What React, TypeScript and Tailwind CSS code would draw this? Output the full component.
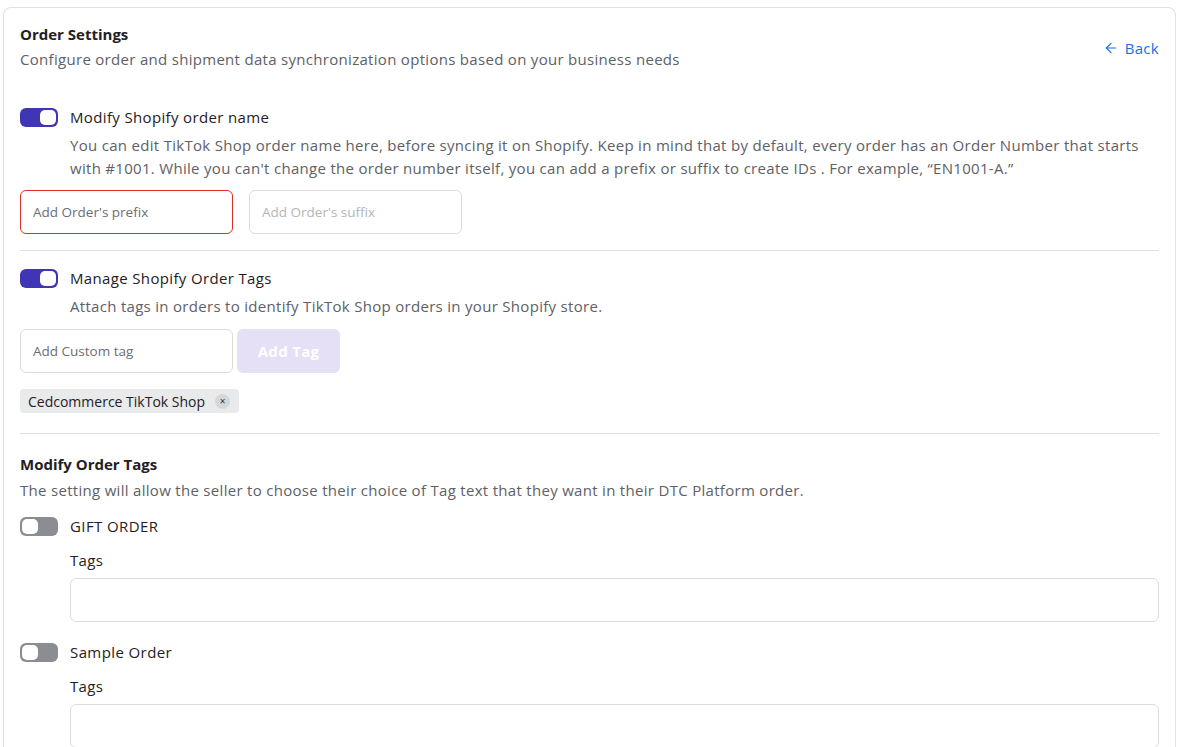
import { ArrowLeft } from "lucide-react";

const Toggle = ({ on }: { on: boolean }) =>
  on ? (
    <div className="w-[38px] h-[19px] rounded-[6px] bg-[#3f35b5] flex items-center justify-end p-[2px] shrink-0">
      <div className="w-[16px] h-[15px] rounded-[5px] bg-white" />
    </div>
  ) : (
    <div className="w-[38px] h-[19px] rounded-[6px] bg-[#8a8d92] flex items-center justify-start p-[2px] shrink-0">
      <div className="w-[16px] h-[15px] rounded-[5px] bg-white" />
    </div>
  );

const TagField = ({ label }: { label: string }) => (
  <div>
    <div className="flex items-center gap-3 h-[19px]">
      <Toggle on={false} />
      <span className="text-[15px] tracking-[0.4px] text-[#1f2124]">{label}</span>
    </div>
    <div className="pl-[50px] mt-[15px]">
      <div className="text-[15px] tracking-[0.35px] text-[#1f2124] leading-[18px]">Tags</div>
      <div className="mt-[9px] h-[44px] border border-[#dcdcdc] rounded-[6px] bg-white" />
    </div>
  </div>
);

export default function App() {
  return (
    <div
      className="bg-white min-h-[747px] pt-[7px] pl-[3px] pr-[7px]"
      style={{ fontFamily: "'Open Sans', 'Noto Sans', sans-serif" }}
    >
      <div className="border border-[#e1e1e1] border-b-0 rounded-t-[8px] px-[16px] pt-[16px] pb-[20px]">
        {/* header */}
        <div className="flex justify-between items-start">
          <div>
            <h1 className="text-[15px] font-bold text-[#1f2124] leading-[20px]">Order Settings</h1>
            <p className="text-[15px] tracking-[0.3px] text-[#5e6166] leading-[20px] mt-[5px]">
              Configure order and shipment data synchronization options based on your business needs
            </p>
          </div>
          <button className="flex items-center gap-[6px] text-[#1b6fe0] text-[15px] tracking-[0.3px] mt-[13px]">
            <ArrowLeft size={16} strokeWidth={1.8} />
            Back
          </button>
        </div>

        {/* order name */}
        <div className="mt-[39px]">
          <div className="flex items-center gap-3 h-[19px]">
            <Toggle on />
            <span className="text-[15px] tracking-[0.35px] text-[#1f2124]">Modify Shopify order name</span>
          </div>
          <p className="pl-[50px] mt-[7px] text-[15px] tracking-[0.3px] text-[#5e6166] leading-[23px]">
            You can edit TikTok Shop order name here, before syncing it on Shopify. Keep in mind that by default, every order has an Order Number that starts with #1001. While you can't change the order number itself, you can add a prefix or suffix to create IDs . For example, “EN1001-A.”
          </p>
          <div className="flex gap-[16px] mt-[10px]">
            <input
              placeholder="Add Order's prefix"
              className="w-[213px] h-[44px] border border-[#d93025] rounded-[6px] px-[12px] text-[13.5px] placeholder:text-[#6b6e73] outline-none"
            />
            <input
              placeholder="Add Order's suffix"
              className="w-[213px] h-[44px] border border-[#dcdcdc] rounded-[6px] px-[12px] text-[13.5px] placeholder:text-[#b3b5b8] outline-none"
            />
          </div>
        </div>

        <div className="h-px bg-[#e1e1e1] mt-[16px]" />

        {/* order tags */}
        <div className="mt-[18px]">
          <div className="flex items-center gap-3 h-[19px]">
            <Toggle on />
            <span className="text-[15px] tracking-[0.35px] text-[#1f2124]">Manage Shopify Order Tags</span>
          </div>
          <p className="pl-[50px] mt-[7px] text-[15px] tracking-[0.3px] text-[#5e6166] leading-[23px]">
            Attach tags in orders to identify TikTok Shop orders in your Shopify store.
          </p>
          <div className="flex gap-[4px] mt-[11px]">
            <input
              placeholder="Add Custom tag"
              className="w-[213px] h-[44px] border border-[#dcdcdc] rounded-[6px] px-[12px] text-[13.5px] placeholder:text-[#6b6e73] outline-none"
            />
            <button className="w-[103px] h-[44px] rounded-[6px] bg-[#e5e0f5] text-white font-bold text-[15px] tracking-[0.3px]">
              Add Tag
            </button>
          </div>
          <div className="mt-[16px] inline-flex items-center gap-[10px] h-[24px] pl-[8px] pr-[9px] rounded-[4px] bg-[#e9eaec]">
            <span className="text-[14px] text-[#1f2124]">Cedcommerce TikTok Shop</span>
            <span className="w-[15px] h-[15px] rounded-full bg-[#d6d7da] flex items-center justify-center text-[10px] leading-none text-[#303236]">
              ×
            </span>
          </div>
        </div>

        <div className="h-px bg-[#e1e1e1] mt-[20px]" />

        {/* modify order tags */}
        <div className="mt-[20px]">
          <h2 className="text-[15px] font-bold text-[#1f2124] leading-[20px]">Modify Order Tags</h2>
          <p className="text-[15px] tracking-[0.3px] text-[#5e6166] leading-[20px] mt-[6px]">
            The setting will allow the seller to choose their choice of Tag text that they want in their DTC Platform order.
          </p>
          <div className="mt-[17px] flex flex-col gap-[21px]">
            <TagField label="GIFT ORDER" />
            <TagField label="Sample Order" />
          </div>
        </div>
      </div>
    </div>
  );
}
